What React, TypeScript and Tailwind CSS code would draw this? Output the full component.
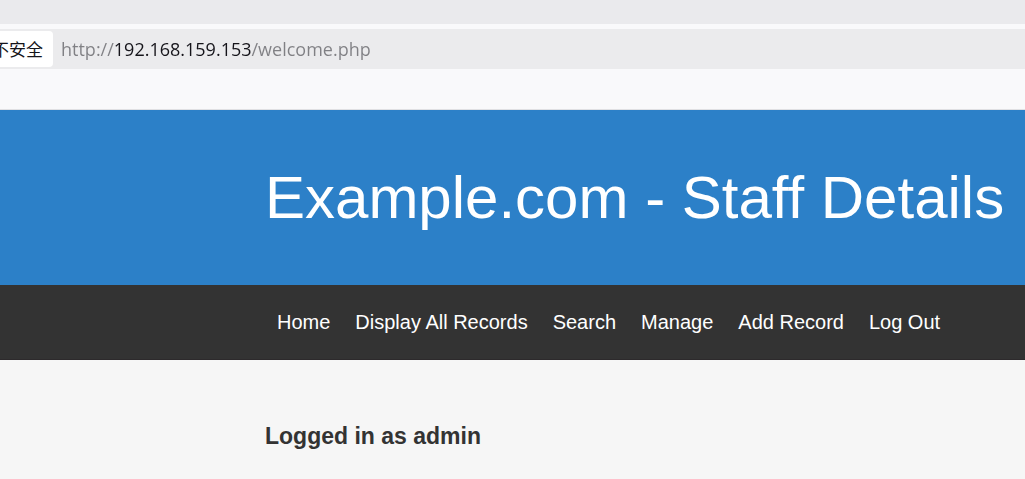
const links = ["Home", "Display All Records", "Search", "Manage", "Add Record", "Log Out"];

function AddressBar() {
  return (
    <div className="border-b border-[#e0e0e3] bg-[#f9f9fb] pb-10">
      <div className="h-6 bg-[#eaeaed]" />
      <div className="mt-[5px] flex h-10 items-center gap-2 bg-[#ebebed]">
        <button
          type="button"
          className="-ml-2 h-9 shrink-0 rounded bg-white pr-[10px] font-['Noto_Sans_CJK_SC',sans-serif] text-[17px] leading-6 text-[#15141a]"
        >
          不安全
        </button>
        <input
          type="text"
          aria-label="Address"
          defaultValue="http://192.168.159.153/welcome.php"
          className="min-w-0 flex-1 bg-[linear-gradient(90deg,#808084_53px,#15141a_53px,#15141a_190px,#808084_190px)] bg-clip-text font-['Open_Sans','Noto_Sans',sans-serif] text-lg leading-6 text-transparent caret-black outline-none"
        />
      </div>
    </div>
  );
}

export default function App() {
  return (
    <div className="flex min-h-screen flex-col overflow-hidden bg-[#f6f6f6] font-['Liberation_Sans',Arial,sans-serif]">
      <AddressBar />
      <header className="bg-[#2c80c8] py-[52px] pl-[265px]">
        <h1 className="whitespace-nowrap text-[60px] leading-[71px] text-white">Example.com - Staff Details</h1>
      </header>
      <nav className="flex gap-[25px] border-b border-[#2d2a2c] bg-[#333] py-[25px] pl-[277px]">
        {links.map((label) => (
          <a key={label} href="#" className="whitespace-nowrap text-xl leading-6 text-white">
            {label}
          </a>
        ))}
      </nav>
      <main className="pt-[62px] pl-[265px]">
        <h2 className="text-[23px] font-bold leading-7 text-[#333]">Logged in as admin</h2>
      </main>
    </div>
  );
}
